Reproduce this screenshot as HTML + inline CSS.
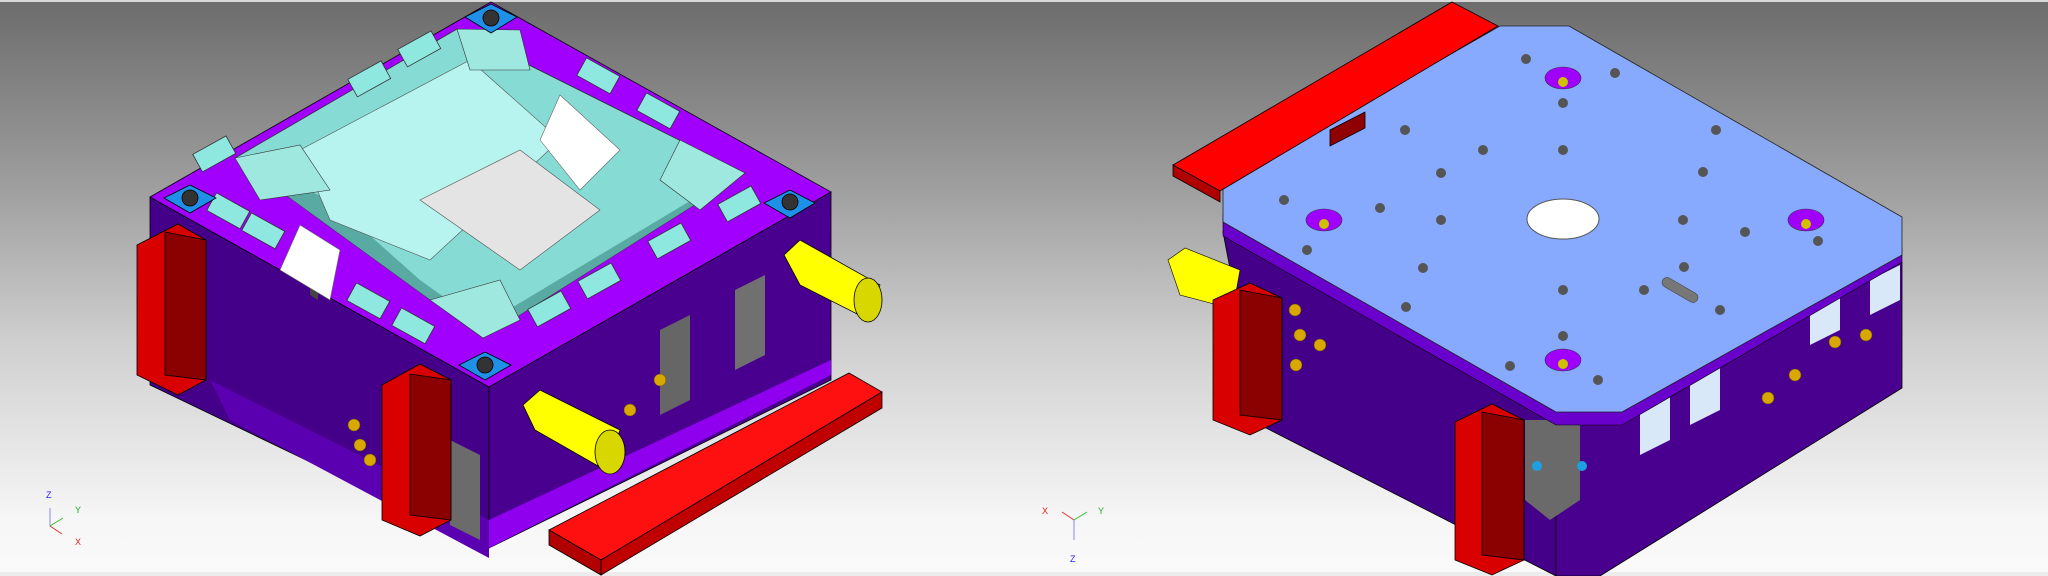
<!DOCTYPE html>
<html><head><meta charset="utf-8"><style>
html,body{margin:0;padding:0;width:2048px;height:576px;overflow:hidden}
body{background:linear-gradient(#6c6c6c 0%,#9a9a9a 30%,#d0d0d0 60%,#f6f6f6 90%,#fafafa 100%)}
svg{position:absolute;left:0;top:0}
</style></head><body>
<svg width="2048" height="576" viewBox="0 0 2048 576" font-family="Liberation Sans, sans-serif">
<rect x="0" y="0" width="2048" height="2" fill="#d8d8d8"/>
<rect x="0" y="572" width="2048" height="4" fill="#ececec"/>
<!-- LEFT MOLD -->
<polygon points="150,197 489,387 489,548 150,385" fill="#440088" stroke="#000" stroke-width="0.8"/>
<polygon points="489,387 831,192 831,380 489,548" fill="#4a008f" stroke="#000" stroke-width="0.8"/>
<polygon points="210,380 489,520 489,558 230,420" fill="#5a00b0"/>
<polygon points="489,520 831,360 831,375 489,548" fill="#8f00ee"/>
<polygon points="660,330 690,315 690,400 660,415" fill="#666"/>
<polygon points="735,290 765,275 765,355 735,370" fill="#707070"/>
<polygon points="450,440 480,455 480,540 450,525" fill="#6b6b6b"/>
<polygon points="310,270 318,275 318,300 310,295" fill="#444"/>
<polygon points="630,270 640,265 640,300 630,305" fill="#444"/>
<!-- top frame -->
<polygon points="491,2 831,192 489,387 150,197" fill="#a100ff" stroke="#000" stroke-width="0.8"/>
<!-- cyan core -->
<polygon points="457,29 745,173 483,338 235,158" fill="#86dcd4" stroke="#333" stroke-width="0.8"/>
<polygon points="250,165 330,200 420,280 483,325 483,338 235,158" fill="#5aaaa4"/>
<polygon points="483,325 700,195 745,173 483,338" fill="#5aaaa4"/>
<polygon points="300,150 470,60 560,140 430,260 330,220" fill="#b8f4ef" stroke="#555" stroke-width="0.6"/>
<polygon points="420,200 520,150 600,210 520,270" fill="#e4e4e4" stroke="#555" stroke-width="0.6"/>
<polygon points="560,95 620,150 580,190 540,140" fill="#ffffff" stroke="#666" stroke-width="0.6"/>
<polygon points="300,225 340,250 330,300 280,270" fill="#ffffff" stroke="#666" stroke-width="0.6"/>
<polygon points="235,158 300,145 330,190 260,200" fill="#9fe8e0" stroke="#333" stroke-width="0.6"/>
<polygon points="457,29 520,30 530,70 470,70" fill="#9fe8e0" stroke="#333" stroke-width="0.6"/>
<polygon points="680,140 745,173 700,210 660,180" fill="#9fe8e0" stroke="#333" stroke-width="0.6"/>
<polygon points="430,300 500,280 520,320 483,338" fill="#9fe8e0" stroke="#333" stroke-width="0.6"/>
<g fill="#8fe8e0" stroke="#333" stroke-width="0.8">
<rect x="210" y="200" width="38" height="20" transform="rotate(29 227 209)"/>
<rect x="245" y="220" width="38" height="20" transform="rotate(29 262 229)"/>
<rect x="350" y="290" width="38" height="20" transform="rotate(29 367 299)"/>
<rect x="395" y="315" width="38" height="20" transform="rotate(29 412 324)"/>
<rect x="530" y="300" width="38" height="20" transform="rotate(-29 547 309)"/>
<rect x="580" y="272" width="38" height="20" transform="rotate(-29 597 281)"/>
<rect x="650" y="232" width="38" height="20" transform="rotate(-29 667 241)"/>
<rect x="720" y="195" width="38" height="20" transform="rotate(-29 737 204)"/>
<rect x="580" y="65" width="38" height="20" transform="rotate(29 597 74)"/>
<rect x="640" y="100" width="38" height="20" transform="rotate(29 657 109)"/>
<rect x="400" y="40" width="38" height="20" transform="rotate(-29 417 49)"/>
<rect x="350" y="70" width="38" height="20" transform="rotate(-29 367 79)"/>
<rect x="195" y="145" width="38" height="20" transform="rotate(-29 212 154)"/>
</g>
<g fill="#1e90e8" stroke="#000" stroke-width="0.8">
<polygon points="491,4 517,17 491,33 465,17"/><circle cx="491" cy="18" r="8" fill="#333"/>
<polygon points="790,190 815,203 790,218 764,203"/><circle cx="790" cy="202" r="8" fill="#333"/>
<polygon points="485,352 511,365 485,380 459,365"/><circle cx="485" cy="365" r="8" fill="#333"/>
<polygon points="190,185 216,198 190,213 164,198"/><circle cx="190" cy="198" r="8" fill="#333"/>
</g>
<g stroke="#000" stroke-width="0.8">
<polygon points="784,255 800,240 880,285 865,318 800,285" fill="#ffff00"/>
<ellipse cx="868" cy="300" rx="14" ry="22" fill="#d8d800"/>
<polygon points="523,405 540,390 620,430 605,470 535,430" fill="#ffff00"/>
<ellipse cx="610" cy="452" rx="15" ry="22" fill="#d8d800"/>
</g>
<g stroke="#000" stroke-width="0.8">
<polygon points="137,245 178,224 206,240 206,380 178,395 137,375" fill="#d80000"/>
<polygon points="165,232 206,240 206,380 165,375" fill="#8b0000"/>
<polygon points="382,385 420,364 451,380 451,520 420,536 382,520" fill="#d80000"/>
<polygon points="410,374 451,380 451,520 410,515" fill="#8b0000"/>
<polygon points="549,530 849,373 882,392 601,560" fill="#ff1010"/>
<polygon points="549,530 601,560 601,575 549,545" fill="#b00000"/>
<polygon points="601,560 882,392 882,408 601,575" fill="#c00000"/>
</g>
<g stroke-width="1">
<line x1="50" y1="508" x2="50" y2="526" stroke="#8888ff"/>
<line x1="50" y1="526" x2="63" y2="518" stroke="#30c030"/>
<line x1="50" y1="526" x2="62" y2="534" stroke="#e03030"/>
</g>
<text x="46" y="498" font-size="9" fill="#2222ff">Z</text>
<text x="75" y="513" font-size="9" fill="#20b020">Y</text>
<text x="75" y="545" font-size="9" fill="#e02020">X</text>

<!-- RIGHT MOLD -->
<polygon points="1223,232 1556,419 1556,576 1260,425" fill="#440088" stroke="#000" stroke-width="0.8"/>
<polygon points="1622,419 1902,262 1902,388 1600,576 1556,576 1556,419" fill="#4a008f" stroke="#000" stroke-width="0.8"/>
<polygon points="1525,420 1580,420 1580,500 1550,520 1525,500" fill="#6a6a6a"/>
<polygon points="1640,405 1670,390 1670,440 1640,455" fill="#d8e8f8"/>
<polygon points="1690,380 1720,365 1720,410 1690,425" fill="#d8e8f8"/>
<polygon points="1810,310 1840,295 1840,330 1810,345" fill="#d8e8f8"/>
<polygon points="1870,280 1900,265 1900,300 1870,315" fill="#d8e8f8"/>
<polygon points="1223,215 1556,405 1622,405 1902,248 1902,262 1622,425 1556,425 1223,236" fill="#6a00cc" stroke="#000" stroke-width="0.6"/>
<polygon points="1500,26 1569,26 1902,217 1902,255 1622,412 1556,412 1223,222 1223,184" fill="#87aaff" stroke="#222" stroke-width="0.8"/>
<ellipse cx="1563" cy="219" rx="36" ry="20" fill="#fff" stroke="#555"/>
<g fill="#a000ff" stroke="#333" stroke-width="0.6">
<ellipse cx="1563" cy="78" rx="18" ry="11"/><ellipse cx="1324" cy="220" rx="18" ry="11"/>
<ellipse cx="1806" cy="220" rx="18" ry="11"/><ellipse cx="1563" cy="360" rx="18" ry="11"/>
</g>
<g fill="#d0c000"><circle cx="1563" cy="82" r="5"/><circle cx="1324" cy="224" r="5"/><circle cx="1806" cy="224" r="5"/><circle cx="1563" cy="364" r="5"/></g>
<g fill="#555"><circle cx="1526" cy="59" r="5"/><circle cx="1615" cy="73" r="5"/><circle cx="1563" cy="103" r="5"/><circle cx="1405" cy="130" r="5"/><circle cx="1483" cy="150" r="5"/><circle cx="1563" cy="150" r="5"/><circle cx="1716" cy="130" r="5"/><circle cx="1441" cy="173" r="5"/><circle cx="1703" cy="172" r="5"/><circle cx="1284" cy="200" r="5"/><circle cx="1380" cy="208" r="5"/><circle cx="1441" cy="220" r="5"/><circle cx="1683" cy="220" r="5"/><circle cx="1745" cy="232" r="5"/><circle cx="1818" cy="241" r="5"/><circle cx="1307" cy="250" r="5"/><circle cx="1423" cy="268" r="5"/><circle cx="1684" cy="267" r="5"/><circle cx="1563" cy="290" r="5"/><circle cx="1644" cy="290" r="5"/><circle cx="1406" cy="307" r="5"/><circle cx="1720" cy="310" r="5"/><circle cx="1563" cy="336" r="5"/><circle cx="1510" cy="366" r="5"/><circle cx="1598" cy="380" r="5"/></g>
<g fill="#777" stroke="#333" stroke-width="0.5"><rect x="1660" y="285" width="40" height="10" rx="5" transform="rotate(30 1680 290)"/></g>
<polygon points="1168,260 1185,248 1240,270 1233,309 1180,295" fill="#ffff00" stroke="#000" stroke-width="0.6"/>
<g stroke="#000" stroke-width="0.8">
<polygon points="1452,2 1498,26 1220,191 1173,165" fill="#ff0000"/>
<polygon points="1173,165 1220,191 1220,202 1173,176" fill="#b00000"/>
<polygon points="1330,130 1365,112 1365,128 1330,146" fill="#900000"/>
<polygon points="1213,300 1250,283 1282,298 1282,420 1250,435 1213,420" fill="#d80000"/>
<polygon points="1240,290 1282,298 1282,420 1240,415" fill="#8b0000"/>
<polygon points="1455,422 1492,404 1524,420 1524,560 1492,575 1455,560" fill="#d80000"/>
<polygon points="1482,412 1524,420 1524,560 1482,555" fill="#8b0000"/>
</g>
<g fill="#d8a800" stroke="#6a5000" stroke-width="0.5">
<circle cx="1295" cy="310" r="6"/><circle cx="1300" cy="335" r="6"/><circle cx="1320" cy="345" r="6"/><circle cx="1296" cy="365" r="6"/>
<circle cx="1835" cy="342" r="6"/><circle cx="1866" cy="335" r="6"/><circle cx="1795" cy="375" r="6"/><circle cx="1768" cy="398" r="6"/>
<circle cx="354" cy="425" r="6"/><circle cx="360" cy="445" r="6"/><circle cx="370" cy="460" r="6"/><circle cx="660" cy="380" r="6"/><circle cx="630" cy="410" r="6"/>
</g>
<g fill="#1ea0e0"><circle cx="1537" cy="466" r="5"/><circle cx="1582" cy="466" r="5"/></g>
<g stroke-width="1">
<line x1="1074" y1="520" x2="1074" y2="540" stroke="#8888ff"/>
<line x1="1074" y1="520" x2="1062" y2="512" stroke="#e03030"/>
<line x1="1074" y1="520" x2="1087" y2="512" stroke="#30c030"/>
</g>
<text x="1042" y="514" font-size="9" fill="#e02020">X</text>
<text x="1098" y="514" font-size="9" fill="#20b020">Y</text>
<text x="1070" y="562" font-size="9" fill="#2222ff">Z</text>
</svg>
</body></html>
